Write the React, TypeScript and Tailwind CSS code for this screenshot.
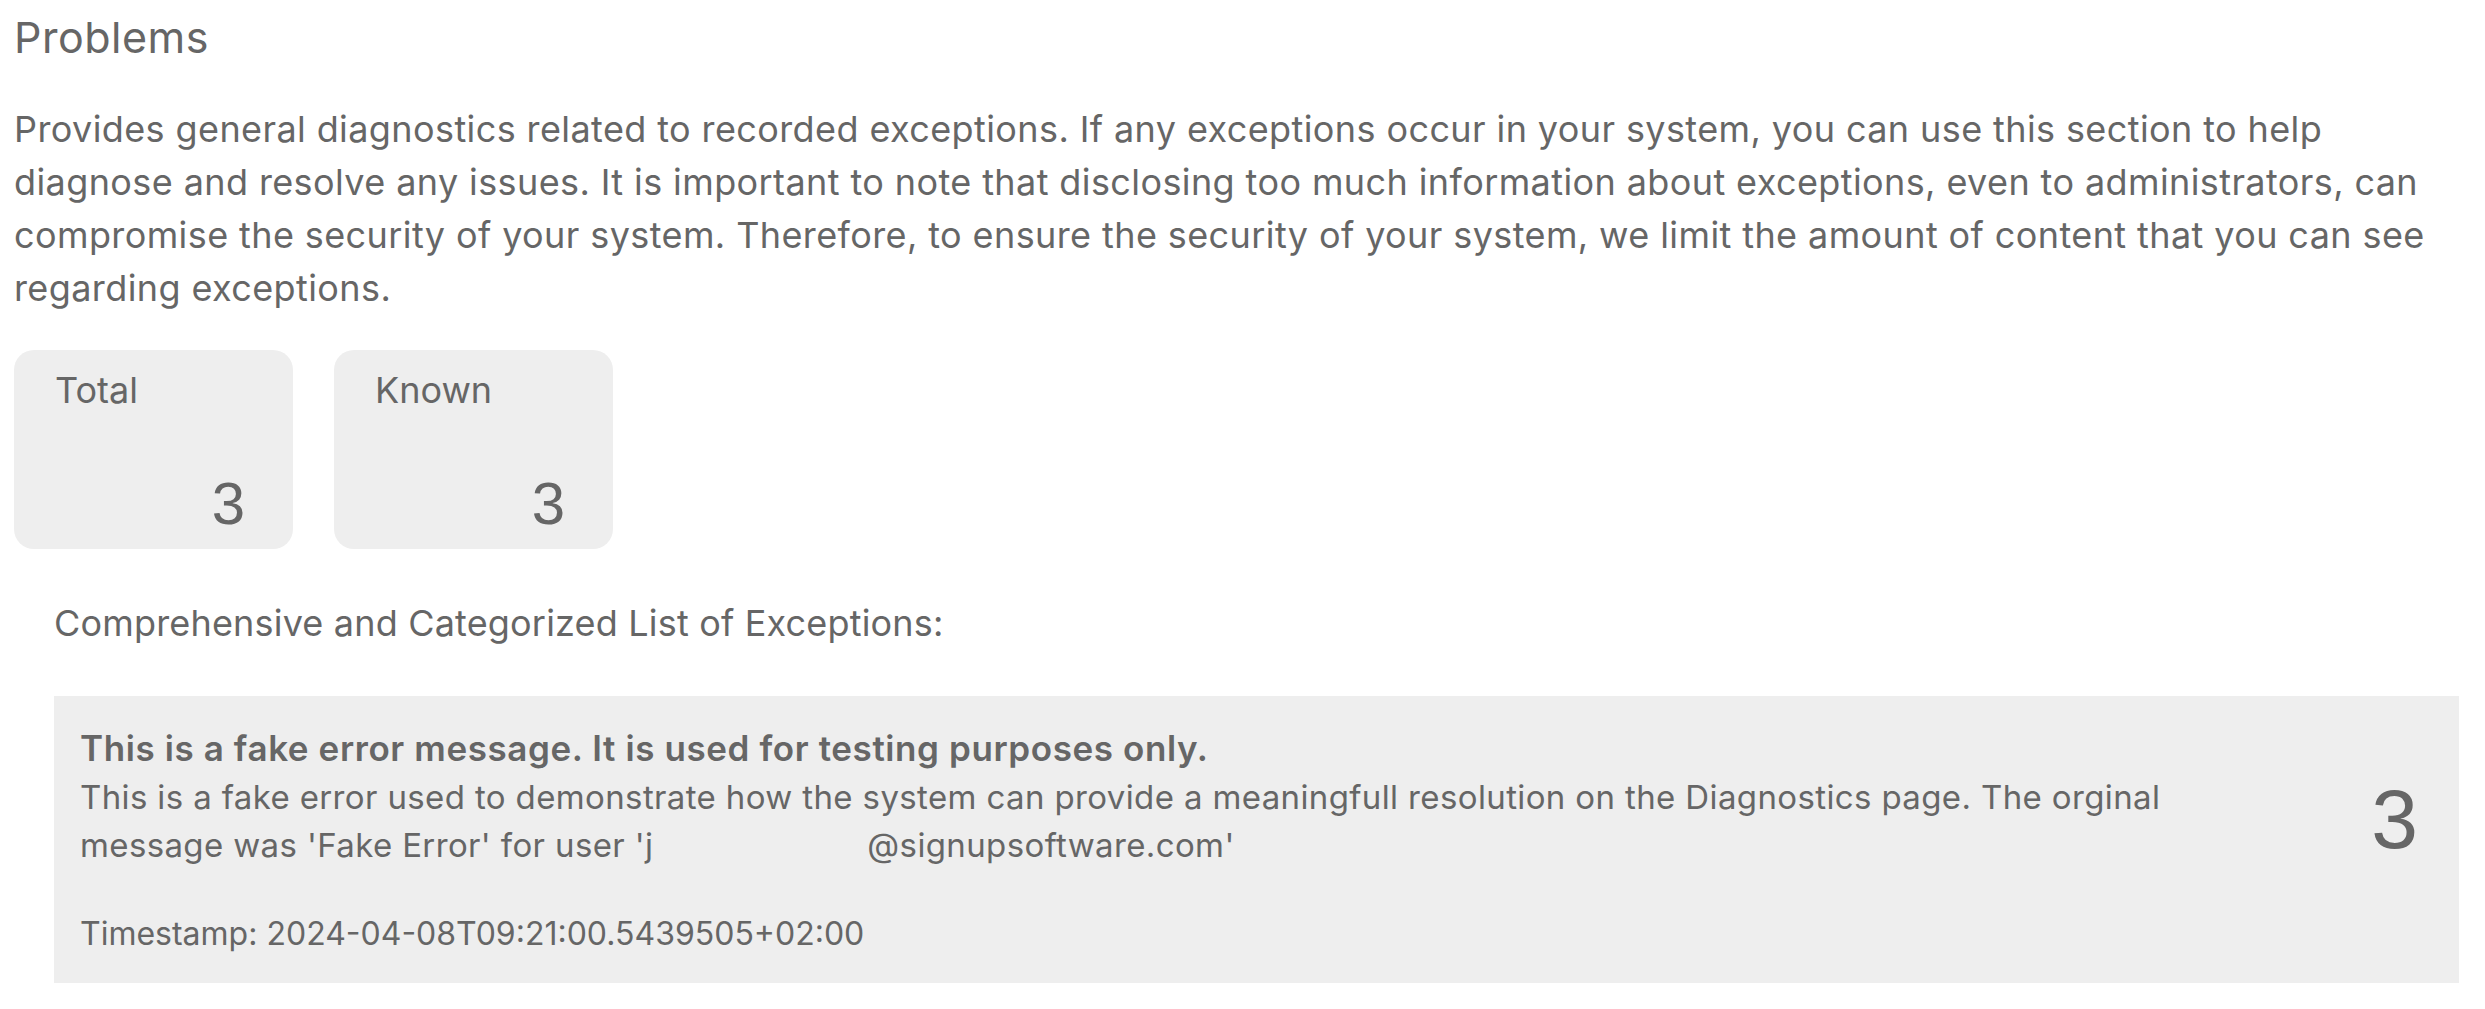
import React from "react";

const FONT = { fontFamily: "Inter, 'Noto Sans', sans-serif" };

// ─── Stat card ───────────────────────────────────────────────────────────────

function StatCard({ label, value }: { label: string; value: number }) {
  return (
    <div className="flex h-[199px] w-[279px] flex-col justify-between rounded-[20px] bg-[#eeeeee] pt-[14px] pb-[15px]">
      <div className="pl-[41px] text-[36px] leading-[53px]">{label}</div>
      <div className="pr-[48px] text-right font-['Liberation_Sans',Arial,sans-serif] text-[60px] leading-[60px]">
        {value}
      </div>
    </div>
  );
}

// ─── Exception row ───────────────────────────────────────────────────────────

function ExceptionItem() {
  return (
    <li className="flex justify-between bg-[#eeeeee] pt-[28px] pr-[41px] pb-[25px] pl-[26px]">
      <div className="w-[2170px]">
        <div className="text-[35px] font-semibold leading-[49px] tracking-[0.6px]">
          This is a fake error message. It is used for testing purposes only.
        </div>
        <div className="text-[33px] leading-[48px] tracking-[0.37px]">
          This is a fake error used to demonstrate how the system can provide a meaningfull resolution on the
          Diagnostics page. The orginal message was 'Fake Error' for user 'j
          <span className="ml-[214px]">@signupsoftware.com'</span>
        </div>
        <div className="mt-[41px] text-[32px] leading-[48px]">Timestamp: 2024-04-08T09:21:00.5439505+02:00</div>
      </div>
      <div className="mt-[53px] self-start font-['Liberation_Sans',Arial,sans-serif] text-[84px] leading-[84px]">
        3
      </div>
    </li>
  );
}

// ─── Page ────────────────────────────────────────────────────────────────────

export default function App() {
  return (
    <div className="min-h-screen bg-white text-[#666666]" style={FONT}>
      <div className="w-[2459px] pl-[14px] pt-[13px]">
        <h1 className="text-[43px] font-normal leading-[48px] tracking-[0.5px]">Problems</h1>

        <p className="mt-[42px] text-[36px] leading-[53px] tracking-[0.4px]">
          Provides general diagnostics related to recorded exceptions. If any exceptions occur in your system, you can
          use this section to help diagnose and resolve any issues. It is important to note that disclosing too much
          information about exceptions, even to administrators, can compromise the security of your system.
          Therefore, to ensure the security of your system, we limit the amount of content that you can see regarding
          exceptions.
        </p>

        <div className="mt-[35px] flex gap-[41px]">
          <StatCard label="Total" value={3} />
          <StatCard label="Known" value={3} />
        </div>

        <div className="mt-[48px] pl-[40px]">
          <div className="text-[36px] leading-[53px] tracking-[0.18px]">
            Comprehensive and Categorized List of Exceptions:
          </div>
          <ul className="mt-[46px]">
            <ExceptionItem />
          </ul>
        </div>
      </div>
    </div>
  );
}
